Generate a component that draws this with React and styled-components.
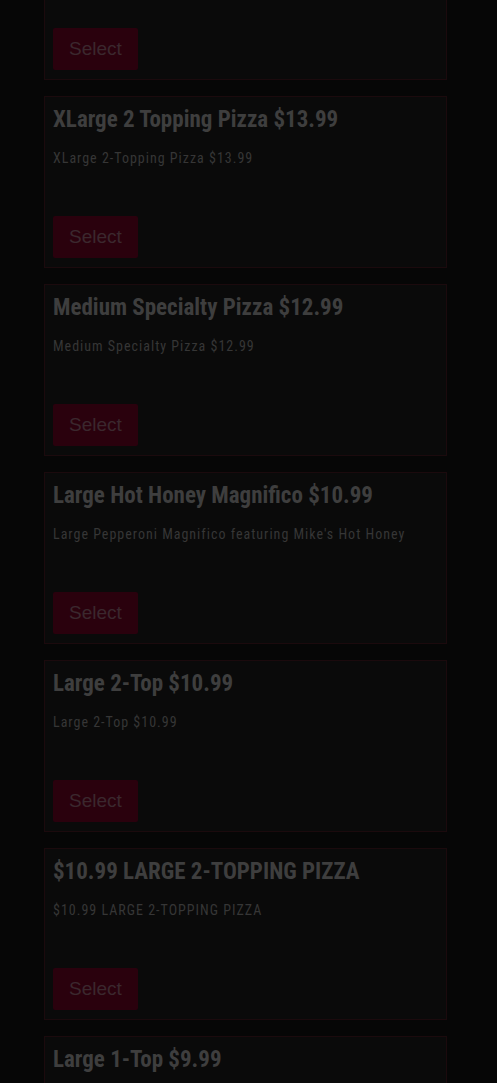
import React from "react";
import styled, { createGlobalStyle } from "styled-components";

const GlobalStyle = createGlobalStyle`
  html, body {
    margin: 0;
    padding: 0;
    background: #060606;
    overflow: hidden;
  }
`;

const Page = styled.div`
  height: 1083px;
  overflow: hidden;
  background: #060606;
`;

const List = styled.div`
  display: flex;
  flex-direction: column;
  gap: 16px;
  width: 403px;
  margin: -92px 0 0 44px;
`;

const Card = styled.div`
  box-sizing: border-box;
  height: 172px;
  padding: 9px 8px;
  border: 1px solid #1b0a0d;
  background: #0a0a0a;
  display: flex;
  flex-direction: column;
`;

const Title = styled.h3`
  margin: 0;
  font-family: "Roboto Condensed", "Liberation Sans Narrow", "Roboto", sans-serif;
  font-weight: 700;
  font-size: 23px;
  line-height: 28px;
  color: #3e3e3e;
`;

const Desc = styled.p`
  margin: 14px 0 0;
  font-family: "Roboto Condensed", "Roboto", sans-serif;
  font-size: 14px;
  letter-spacing: 1px;
  line-height: 20px;
  color: #363636;
`;

const Button = styled.button`
  margin-top: auto;
  align-self: flex-start;
  height: 42px;
  padding: 0 16px;
  border: none;
  border-radius: 2px;
  background: #2a010d;
  color: #3b282e;
  font-family: "Liberation Sans", Arial, sans-serif;
  font-size: 19px;
`;

const items = [
  { title: "Large 2 Topping Pizza $11.99", desc: "Large 2-Topping Pizza $11.99" },
  { title: "XLarge 2 Topping Pizza $13.99", desc: "XLarge 2-Topping Pizza $13.99" },
  { title: "Medium Specialty Pizza $12.99", desc: "Medium Specialty Pizza $12.99" },
  {
    title: "Large Hot Honey Magnifico $10.99",
    desc: "Large Pepperoni Magnifico featuring Mike's Hot Honey",
  },
  { title: "Large 2-Top $10.99", desc: "Large 2-Top $10.99" },
  { title: "$10.99 LARGE 2-TOPPING PIZZA", desc: "$10.99 LARGE 2-TOPPING PIZZA" },
  { title: "Large 1-Top $9.99", desc: "Large 1-Top $9.99" },
];

const App = () => (
  <>
    <GlobalStyle />
    <Page>
      <List>
        {items.map((item, i) => (
          <Card key={i}>
            <Title>{item.title}</Title>
            <Desc>{item.desc}</Desc>
            <Button type="button">Select</Button>
          </Card>
        ))}
      </List>
    </Page>
  </>
);

export default App;
